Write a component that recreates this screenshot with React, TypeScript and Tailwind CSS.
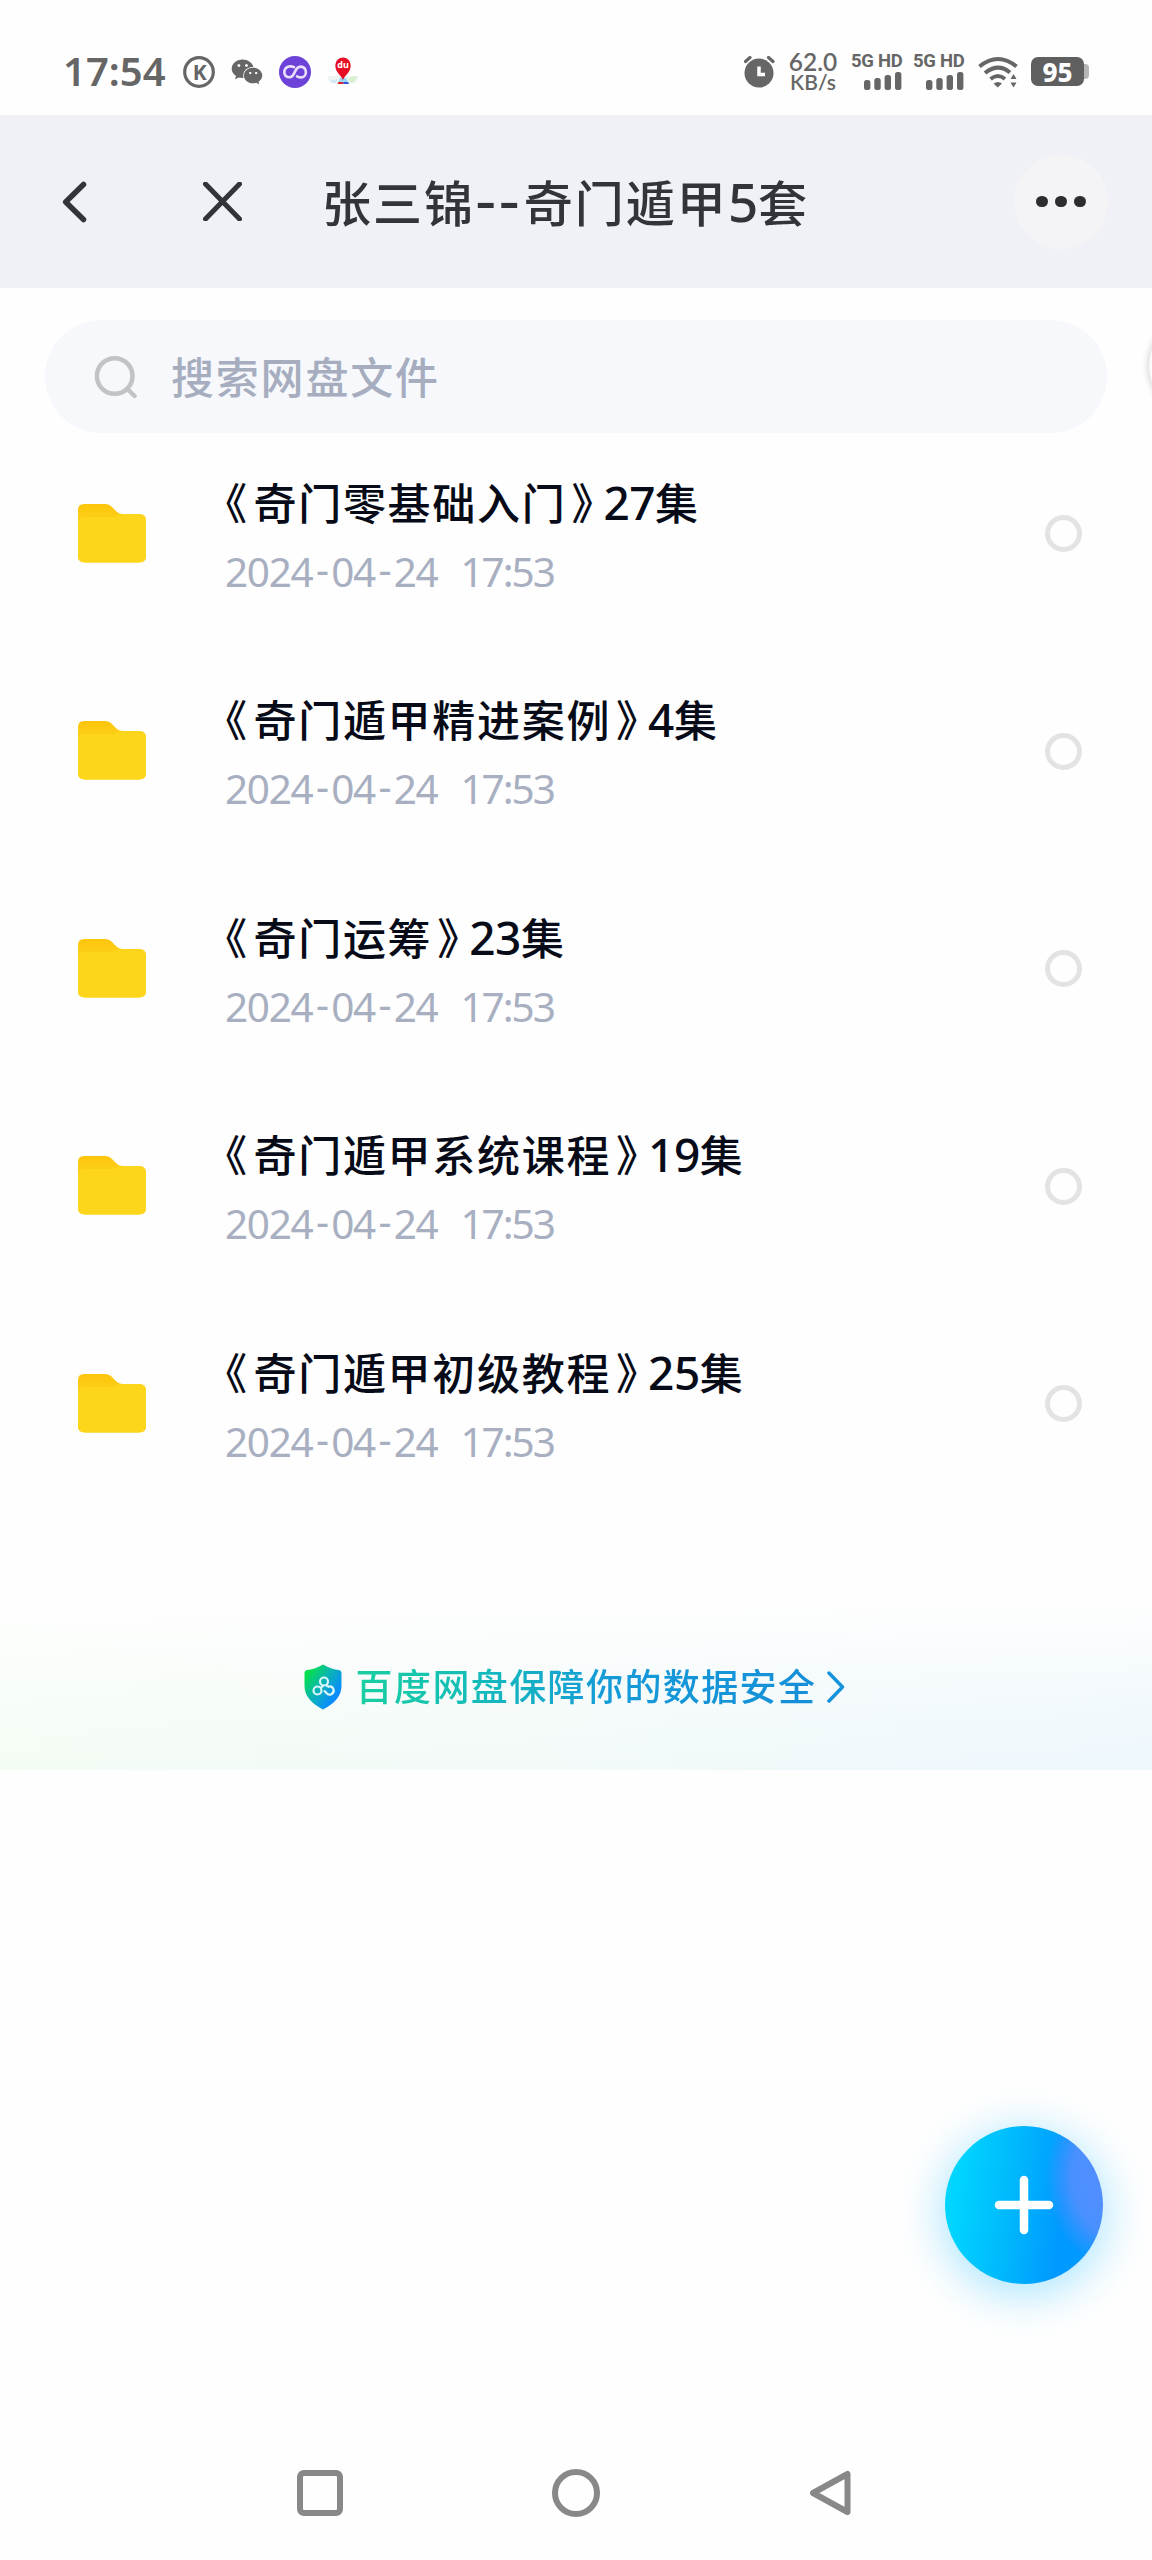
import { FaWeixin } from "react-icons/fa";

const folders = [
  { name: "奇门零基础入门", count: "27", date: "2024-04-24", time: "17:53" },
  { name: "奇门遁甲精进案例", count: "4", date: "2024-04-24", time: "17:53" },
  { name: "奇门运筹", count: "23", date: "2024-04-24", time: "17:53" },
  { name: "奇门遁甲系统课程", count: "19", date: "2024-04-24", time: "17:53" },
  { name: "奇门遁甲初级教程", count: "25", date: "2024-04-24", time: "17:53" },
];

const SignalBars = () => (
  <div className="flex w-[51px] flex-col items-end">
    <span className="w-full whitespace-nowrap font-['Roboto',sans-serif] text-[18.500px] font-bold leading-[17px] tracking-[-0.300px]">5G HD</span>
    <svg width="38" height="18" viewBox="0 0 38 18" className="mt-[2px]" fill="#666">
      <rect x="0" y="8" width="6.4" height="10" rx="2.5" />
      <rect x="10.3" y="6" width="6.4" height="12" rx="2.5" />
      <rect x="20.6" y="3" width="6.4" height="15" rx="2.5" />
      <rect x="31" y="0" width="6.4" height="18" rx="2.5" />
    </svg>
  </div>
);

const StatusBar = () => (
  <header className="flex h-[115px] items-center pl-[63px] pt-[28px] font-['Noto_Sans',sans-serif] text-[#666]">
    <span className="mb-[2px] w-[105px] text-[40px] font-semibold leading-none">17:54</span>
    <svg width="32" height="32" viewBox="0 0 32 32" className="ml-[15px]">
      <circle cx="16" cy="16" r="14.3" fill="none" stroke="#666" strokeWidth="3.2" />
      <text x="16.8" y="23.500" textAnchor="middle" fontSize="21" fontWeight="700" fill="#666" fontFamily="Noto Sans, sans-serif">K</text>
    </svg>
    <FaWeixin className="ml-[16px] h-[30px] w-[32px]" />
    <svg width="32" height="32" viewBox="0 0 32 32" className="ml-[16px]">
      <circle cx="16" cy="16" r="16" fill="#6d42d8" />
      <path d="M15 11.200C13 10.200 11.500 10.200 9.800 10.600C3.500 12.500 4 21 10.500 21.300C16.500 21.500 15 10.500 21.500 10.600C28.500 11 28.500 21 22.500 21.400C21 21.500 19.500 21.200 18 20.300" fill="none" stroke="#e9defb" strokeWidth="2.600" strokeLinecap="round" />
    </svg>
    <svg width="34" height="32" viewBox="0 0 34 32" className="ml-[15px]">
      <path d="M1 20h32l-3.500 6.500-5.500 1H9l-5.500-1Z" fill="#eef5f3" />
      <path d="M3 22q4 5 8 0v4q-4 2-6 0Z" fill="#cfe8f4" />
      <path d="M23 22q4-3 8-1l-3 5q-3 2-5-1Z" fill="#d9f0ce" />
      <path d="M14 22h6l3 6H11.500Z" fill="#9bd6f7" />
      <path d="M12.500 26h5v2h-6Z" fill="#e0202e" />
      <path d="M17.500 26h4.500l1 2h-5.500Z" fill="#2c58d8" />
      <path d="M17 24C15 19 9.300 16.500 9.300 9.300A7.700 7.700 0 0 1 24.700 9.300C24.700 16.500 19 19 17 24Z" fill="#e60d25" />
      <text x="17" y="12" textAnchor="middle" fontSize="9" fontWeight="700" fill="#fff" fontFamily="Noto Sans, sans-serif">du</text>
    </svg>

    <div className="ml-auto flex items-center pr-[63px]">
      <svg width="32" height="32" viewBox="0 0 32 32" className="mr-[-1px]">
        <circle cx="15" cy="17" r="14.500" fill="#666" />
        <path d="M1.500 5.500 6 1.500M29 5.500 24.500 1.500" stroke="#666" strokeWidth="3.200" strokeLinecap="round" />
        <path d="M15 10.500V18.500H21" fill="none" stroke="#fff" strokeWidth="3.500" />
      </svg>
      <div className="ml-[12px] flex w-[52px] flex-col items-center font-['Lato',sans-serif]">
        <span className="text-[24.500px] font-semibold leading-[18px]">62.0</span>
        <span className="mt-[2px] text-[21px] font-semibold leading-[18px]">KB/s</span>
      </div>
      <div className="ml-[12px]">
        <SignalBars />
      </div>
      <div className="ml-[11px]">
        <SignalBars />
      </div>
      <svg width="40" height="32" viewBox="0 0 40 32" className="ml-[14px]">
        <g fill="none" stroke="#666" strokeWidth="4">
          <path d="M1.500 10.500Q20 -4.500 38.500 10.500" />
          <path d="M7 17Q20 6.500 32 16.500" />
          <path d="M12.500 23Q20 17 27 23" />
        </g>
        <path d="M15.500 27.500Q20 24.500 24 27.500L19.700 31.500Z" fill="#666" />
        <path d="M32.500 23 35.500 18 38.500 23ZM32.500 26.500h6L35.500 31.500Z" fill="#666" />
      </svg>
      <div className="ml-[13px] flex h-[29px] w-[53px] items-center justify-center rounded-[7px] bg-[#5f5f5f]">
        <span className="font-['Noto_Sans',sans-serif] text-[26px] font-extrabold leading-none text-white">95</span>
      </div>
      <div className="h-[15px] w-[5px] rounded-r-[4px] bg-[#b5b5b5]" />
    </div>
  </header>
);

const TitleBar = () => (
  <nav className="flex h-[173px] items-center bg-[#f0f1f7] pl-[62px] text-[#333438]">
    <svg width="25" height="42" viewBox="0 0 25 42" fill="none" stroke="#333438" strokeWidth="5.500" strokeLinecap="round" strokeLinejoin="round">
      <path d="M21.500 3.500 3.700 21 21.500 38.500" />
    </svg>
    <svg width="39" height="39" viewBox="0 0 39 39" className="ml-[116px]" fill="none" stroke="#333438" strokeWidth="5" strokeLinecap="round">
      <path d="M2.500 2 36.500 37M36.500 2 2.500 37" />
    </svg>
    <h1 className="mb-[10px] ml-[80px] flex items-baseline whitespace-nowrap text-[49px] font-medium leading-none tracking-[2px]">
      张三锦
      <span className="mr-[2px] text-[60px] leading-none">--</span>
      奇门遁甲
      <span className="w-[30px] font-['Noto_Sans','Noto_Sans_CJK_SC',sans-serif] text-[53px] leading-none">5</span>
      套
    </h1>
    <button className="ml-auto mr-[44px] flex h-[94px] w-[94px] items-center justify-center gap-[7.500px] rounded-full bg-[#f4f4f6]">
      <span className="h-[11.500px] w-[11.500px] rounded-full bg-[#2d2d2f]" />
      <span className="h-[11.500px] w-[11.500px] rounded-full bg-[#2d2d2f]" />
      <span className="h-[11.500px] w-[11.500px] rounded-full bg-[#2d2d2f]" />
    </button>
  </nav>
);

const FolderIcon = () => (
  <svg width="68" height="60" viewBox="0 0 68 60" className="mb-[2px]">
    <defs>
      <linearGradient id="tab" x1="0" y1="0" x2="0" y2="1">
        <stop offset="0" stopColor="#fdc50c" />
        <stop offset="0.350" stopColor="#fdd31b" />
      </linearGradient>
    </defs>
    <path d="M0 7Q0 1 6 1H27C36 1 36 11 45 11H61Q68 11 68 18V53Q68 59.500 61 59.500H7Q0 59.500 0 53Z" fill="url(#tab)" />
    <path d="M0 21Q0 14 7 14H35Q38 14 40.500 11H61Q68 11 68 18V53Q68 59.500 61 59.500H7Q0 59.500 0 53Z" fill="#fdd61c" />
  </svg>
);

const FolderRow = ({ name, count, date, time }: (typeof folders)[number]) => {
  const [year, month, day] = date.split("-");
  return (
    <li className="flex h-[217.5px] items-center pl-[78px] pr-[70px]">
      <FolderIcon />
      <div className="ml-[79px] flex-1 pt-[5px]">
        <p className="ml-[-21px] flex items-baseline whitespace-nowrap text-[43px] font-medium leading-[50px] tracking-[1.700px] text-[#070b18]">
          <span className="tracking-[6.500px]">《</span>
          <span>{name}</span>
          <span className="ml-[5px] tracking-[-11px]">》</span>
          <span className="font-['Noto_Sans',sans-serif] text-[46px] leading-[50px] tracking-[-0.500px]">{count}</span>
          <span>集</span>
        </p>
        <p className="mt-[20px] flex font-['Noto_Sans',sans-serif] text-[40.500px] leading-[50px] tracking-[-1.300px] text-[#a7afc1]">
          <span>{year}</span>
          <span className="mb-[3px] mt-[-3px] px-[3.500px]">-</span>
          <span>{month}</span>
          <span className="mb-[3px] mt-[-3px] px-[3.500px]">-</span>
          <span>{day}</span>
          <span className="ml-[23px] tracking-[-2px]">{time}</span>
        </p>
      </div>
      <span className="h-[37px] w-[37px] rounded-full border-[5.500px] border-[#e3e3e3]" />
    </li>
  );
};

const SafetyBanner = () => (
  <section className="h-[170px] bg-[linear-gradient(90deg,#f4fdf4_0%,#f3faf8_45%,#eff8fc_80%,#edf7fc_100%)]">
    <div className="flex h-full justify-center bg-[linear-gradient(180deg,#fefefe_0%,#fefefe66_50%,#fefefe00_100%)] pr-[3px] pt-[64px]">
      <svg width="38" height="46" viewBox="0 0 38 46">
        <defs>
          <linearGradient id="shield" x1="0.100" y1="0.150" x2="0.800" y2="0.750">
            <stop offset="0" stopColor="#06e04a" />
            <stop offset="0.500" stopColor="#0ab4b4" />
            <stop offset="1" stopColor="#0a8cff" />
          </linearGradient>
        </defs>
        <path d="M19 0.500Q28 5.500 35 6Q37.500 6.500 37.500 9V22Q37.500 36 19 45.500Q0.500 36 0.500 22V9Q0.500 6.500 3 6Q10 5.500 19 0.500Z" fill="url(#shield)" />
        <g fill="none" stroke="#d9f6fa" strokeWidth="2.200">
          <circle cx="20" cy="17.500" r="4" />
          <circle cx="13.500" cy="26.500" r="4" />
          <path d="M19.500 21.500 16.500 24M22 21 24.500 22.700A4 4 0 1 1 22.500 29L20 26.500" />
        </g>
      </svg>
      <p className="ml-[14px] h-[46px] whitespace-nowrap bg-[linear-gradient(90deg,#19cfa0_0%,#14bdb8_25%,#159ad8_55%,#158fd8_100%)] bg-clip-text text-[37px] font-medium leading-[43px] tracking-[1.400px] text-transparent">
        百度网盘保障你的数据安全
      </p>
      <svg width="18" height="32" viewBox="0 0 18 32" className="ml-[11px] mt-[7px]" fill="none" stroke="#1593da" strokeWidth="3.500" strokeLinecap="round" strokeLinejoin="round">
        <path d="M2 2 15.500 16 2 30" />
      </svg>
    </div>
  </section>
);

const App = () => {
  return (
    <div className="relative flex h-[2560px] w-[1152px] flex-col overflow-hidden bg-[#fefefe] font-['Noto_Sans_CJK_SC',sans-serif]">
      <StatusBar />
      <TitleBar />

      {/* Search */}
      <div className="mx-[45px] mt-[32px] flex h-[113px] items-center rounded-full bg-[#f6f8fc] pl-[49px]">
        <svg width="44" height="44" viewBox="0 0 44 44" fill="none" stroke="#c1c3c6" strokeWidth="4.500" strokeLinecap="round">
          <circle cx="20.700" cy="21" r="17.800" />
          <path d="M33.500 34 40.500 41" />
        </svg>
        <span className="mb-[2px] ml-[33px] text-[43px] font-medium leading-none tracking-[1.800px] text-[#a6adbf]">搜索网盘文件</span>
      </div>

      <ul className="mt-[-8px]">
        {folders.map((f) => (
          <FolderRow key={f.name} {...f} />
        ))}
      </ul>

      <div className="mt-[87px]">
        <SafetyBanner />
      </div>

      {/* Edge handle, mostly off screen */}
      <div className="absolute left-[1149px] top-[318px] h-[96px] w-[96px] rounded-full bg-[#fafafa] shadow-[0_0_6px_2px_rgba(0,0,0,0.140)]" />

      {/* Add button */}
      <button className="absolute left-[945px] top-[2126px] flex h-[158px] w-[158px] items-center justify-center rounded-full bg-[radial-gradient(ellipse_48%_60%_at_112%_32%,#5a8cff_0%,#4a90ff_65%,#4a90ff00_100%),linear-gradient(97deg,#00d5ff_10%,#00b8fc_42%,#0099ff_72%)] shadow-[0_8px_44px_4px_rgba(0,180,255,0.320)]">
        <svg width="60" height="60" viewBox="0 0 60 60" stroke="#fff" strokeWidth="8.500" strokeLinecap="round">
          <path d="M30 5V55M5 30H55" />
        </svg>
      </button>

      {/* System navigation */}
      <footer className="mt-auto flex h-[134px] items-center justify-center gap-[209px] pr-[2px]">
        <span className="h-[46px] w-[46px] rounded-[7px] border-[6px] border-[#888]" />
        <span className="h-[48px] w-[48px] rounded-full border-[6px] border-[#888]" />
        <svg width="44" height="46" viewBox="0 0 44 46" fill="none" stroke="#888" strokeWidth="6" strokeLinejoin="round">
          <path d="M4 23 38.500 4V42Z" />
        </svg>
      </footer>
    </div>
  );
};

export default App;
